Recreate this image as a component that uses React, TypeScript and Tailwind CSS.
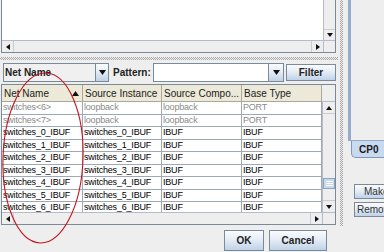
import React from 'react'

type Dir = 'up' | 'down' | 'left' | 'right'

function Tri({ dir, size = 7 }: { dir: Dir; size?: number }) {
  const v = dir === 'up' || dir === 'down'
  const w = v ? size : Math.ceil(size / 2) + 1
  const h = v ? Math.ceil(size / 2) + 1 : size
  const pts = {
    up: `0,${h} ${w},${h} ${w / 2},0`,
    down: `0,0 ${w},0 ${w / 2},${h}`,
    left: `${w},0 ${w},${h} 0,${h / 2}`,
    right: `0,0 0,${h} ${w},${h / 2}`,
  }[dir]
  return (
    <svg width={w} height={h} viewBox={`0 0 ${w} ${h}`}>
      <polygon points={pts} fill="#111" />
    </svg>
  )
}

const checker =
  'bg-[conic-gradient(#a9a9a9_25%,transparent_0_50%,#a9a9a9_0_75%,transparent_0)] bg-[length:2px_2px]'

const blueBtn = 'border border-[#7a8a99] bg-linear-to-b from-[#fafcfd] via-[#e2ebf5] to-[#bfd2e8]'

function HScroll() {
  return (
    <div className="flex h-[12px] border-t border-[#b3bcc8] bg-[#eeeeee]">
      <div className="flex w-[12px] items-center justify-center border-r border-[#c8ced6]">
        <Tri dir="left" size={6} />
      </div>
      <div className="flex-1" />
      <div className="flex w-[12px] items-center justify-center border-l border-[#c8ced6]">
        <Tri dir="right" size={6} />
      </div>
    </div>
  )
}

const rows: [string, string, string, string, boolean][] = [
  ['switches<6>', 'loopback', 'loopback', 'PORT', true],
  ['switches<7>', 'loopback', 'loopback', 'PORT', true],
  ['switches_0_IBUF', 'switches_0_IBUF', 'IBUF', 'IBUF', false],
  ['switches_1_IBUF', 'switches_1_IBUF', 'IBUF', 'IBUF', false],
  ['switches_2_IBUF', 'switches_2_IBUF', 'IBUF', 'IBUF', false],
  ['switches_3_IBUF', 'switches_3_IBUF', 'IBUF', 'IBUF', false],
  ['switches_4_IBUF', 'switches_4_IBUF', 'IBUF', 'IBUF', false],
  ['switches_5_IBUF', 'switches_5_IBUF', 'IBUF', 'IBUF', false],
  ['switches_6_IBUF', 'switches_6_IBUF', 'IBUF', 'IBUF', false],
]

const colW = ['w-[81px]', 'w-[79px]', 'w-[80px]', 'w-[80px]']

export default function App() {
  return (
    <div className="relative flex h-[252px] w-[384px] overflow-hidden bg-[#eeeeee] font-['Liberation_Sans',Arial,sans-serif] text-[#111]">
      {/* left side */}
      <div className="flex w-[340px] flex-col">
        {/* upper scroll pane */}
        <div className="ml-px flex h-[53px] w-[335px] flex-col border-x border-b border-[#7a8a99]">
          <div className="flex h-[40px]">
            <div className="flex-1 bg-white" />
            <div className="flex w-[12px] flex-col justify-end border-l border-[#b3bcc8] bg-[#eeeeee]">
              <div className="flex h-[11px] items-center justify-center border-t border-[#c8ced6]">
                <Tri dir="down" size={6} />
              </div>
            </div>
          </div>
          <div className="flex">
            <div className="flex-1">
              <HScroll />
            </div>
            <div className="w-[12px] border-l border-t border-[#b3bcc8] bg-[#eeeeee]" />
          </div>
        </div>

        {/* splitter */}
        <div className="flex h-[10px] items-center">
          <div className={`h-[3px] w-[338px] ${checker}`} />
        </div>

        {/* filter row */}
        <div className="flex h-[19px] items-center whitespace-nowrap pl-[3px] text-[10px] font-bold text-[#222]">
          <div className="flex h-[19px] w-[106px] border border-[#7a8a99] bg-[#f0f0f0]">
            <div className="flex flex-1 items-center pl-[1px]">Net Name</div>
            <div className={`flex w-[13px] items-center justify-center border-0 border-l ${blueBtn}`}>
              <Tri dir="down" size={7} />
            </div>
          </div>
          <div className="ml-[4px] w-[40px]">Pattern:</div>
          <div className="flex h-[19px] w-[131px] border border-[#7a8a99] bg-white">
            <div className="flex-1" />
            <div className={`flex w-[15px] items-center justify-center border-0 border-l ${blueBtn}`}>
              <Tri dir="down" size={7} />
            </div>
          </div>
          <div className={`ml-[2px] flex h-[17px] w-[50px] items-center justify-center ${blueBtn}`}>Filter</div>
        </div>

        {/* table scroll pane */}
        <div className="ml-px mt-[2px] flex w-[335px] flex-col border border-[#7a8a99] bg-white">
          <div className="flex h-[17px] whitespace-nowrap text-[10px] text-[#222]">
            {['Net Name', 'Source Instance', 'Source Compo...', 'Base Type'].map((h, i) => (
              <div
                key={h}
                className={`${colW[i]} flex items-center justify-between overflow-hidden border-b border-r border-[#aca899] bg-[#ece9d8] pl-[2px] pr-[3px]`}
              >
                <span>{h}</span>
                {i === 0 && <Tri dir="up" size={7} />}
              </div>
            ))}
            <div className="flex-1 border-b border-[#b3bcc8] bg-[#eeeeee]" />
          </div>
          <div className="flex h-[110px]">
            <div className="flex flex-col overflow-hidden whitespace-nowrap text-[9px] tracking-[-0.2px]">
              {rows.map(r => (
                <div key={r[0]} className="flex h-[12.5px] shrink-0">
                  {r.slice(0, 4).map((c, i) => (
                    <div
                      key={i}
                      className={`${colW[i]} flex items-center overflow-hidden border-b border-r border-[#9ea9b8] pl-[1px] ${r[4] ? 'text-[#8a8a8a]' : 'text-black'}`}
                    >
                      {c as string}
                    </div>
                  ))}
                </div>
              ))}
            </div>
            <div className="relative flex w-[13px] flex-col border-l border-[#b3bcc8] bg-[#eeeeee]">
              <div className="flex h-[12px] items-center justify-center border-b border-[#c8ced6]">
                <Tri dir="up" size={6} />
              </div>
              <div className="flex-1" />
              <div className="flex h-[12px] items-center justify-center border-t border-[#c8ced6]">
                <Tri dir="down" size={6} />
              </div>
              <div className="absolute left-0 right-0 top-[76px] flex h-[11px] flex-col items-center justify-center gap-[1px] border border-[#8ea3c0] bg-[#c9d8ec]">
                <div className="h-px w-[7px] bg-white" />
                <div className="h-px w-[7px] bg-white" />
                <div className="h-px w-[7px] bg-white" />
              </div>
            </div>
          </div>
          <div className="flex">
            <div className="flex-1">
              <HScroll />
            </div>
            <div className="w-[13px] border-l border-t border-[#b3bcc8] bg-[#eeeeee]" />
          </div>
        </div>

        {/* dialog buttons */}
        <div className="mt-[5px] flex gap-[5px] pl-[224px] text-[10px] font-bold text-[#222]">
          <div className={`flex h-[21px] w-[40px] items-center justify-center ${blueBtn}`}>OK</div>
          <div className={`flex h-[21px] w-[58px] items-center justify-center ${blueBtn}`}>Cancel</div>
        </div>
      </div>

      {/* vertical divider */}
      <div className={`h-[226px] w-[3px] ${checker}`} />

      {/* right side */}
      <div className="flex w-[41px] flex-col overflow-hidden whitespace-nowrap">
        <div className="ml-[5px] h-[141px] shrink-0 border-b border-l-[3px] border-[#93abcc] bg-[#eeeeee]" />
        <div className="ml-[8px] flex h-[17px] w-[60px] shrink-0 items-center rounded-bl-[5px] border-b border-l border-[#7f97b8] bg-[#c9d9ee] pl-[7px] text-[10px] font-bold text-[#1a1a1a]">
          CP0
        </div>
        <div className={`ml-[11px] mt-[26px] flex h-[15px] w-[60px] shrink-0 items-center overflow-hidden pl-[9px] text-[10px] text-[#333] ${blueBtn}`}>
          Make Group
        </div>
        <div className={`ml-[11px] mt-[3px] flex h-[15px] w-[60px] shrink-0 items-center overflow-hidden pl-[2px] text-[10px] text-[#333] ${blueBtn}`}>
          Remove
        </div>
      </div>

      {/* hand-drawn annotation */}
      <svg className="pointer-events-none absolute inset-0" width="384" height="252" viewBox="0 0 384 252">
        <ellipse cx="43" cy="158" rx="40" ry="85" transform="rotate(2 43 158)" fill="none" stroke="#c3141e" strokeWidth="1.1" />
      </svg>
    </div>
  )
}
